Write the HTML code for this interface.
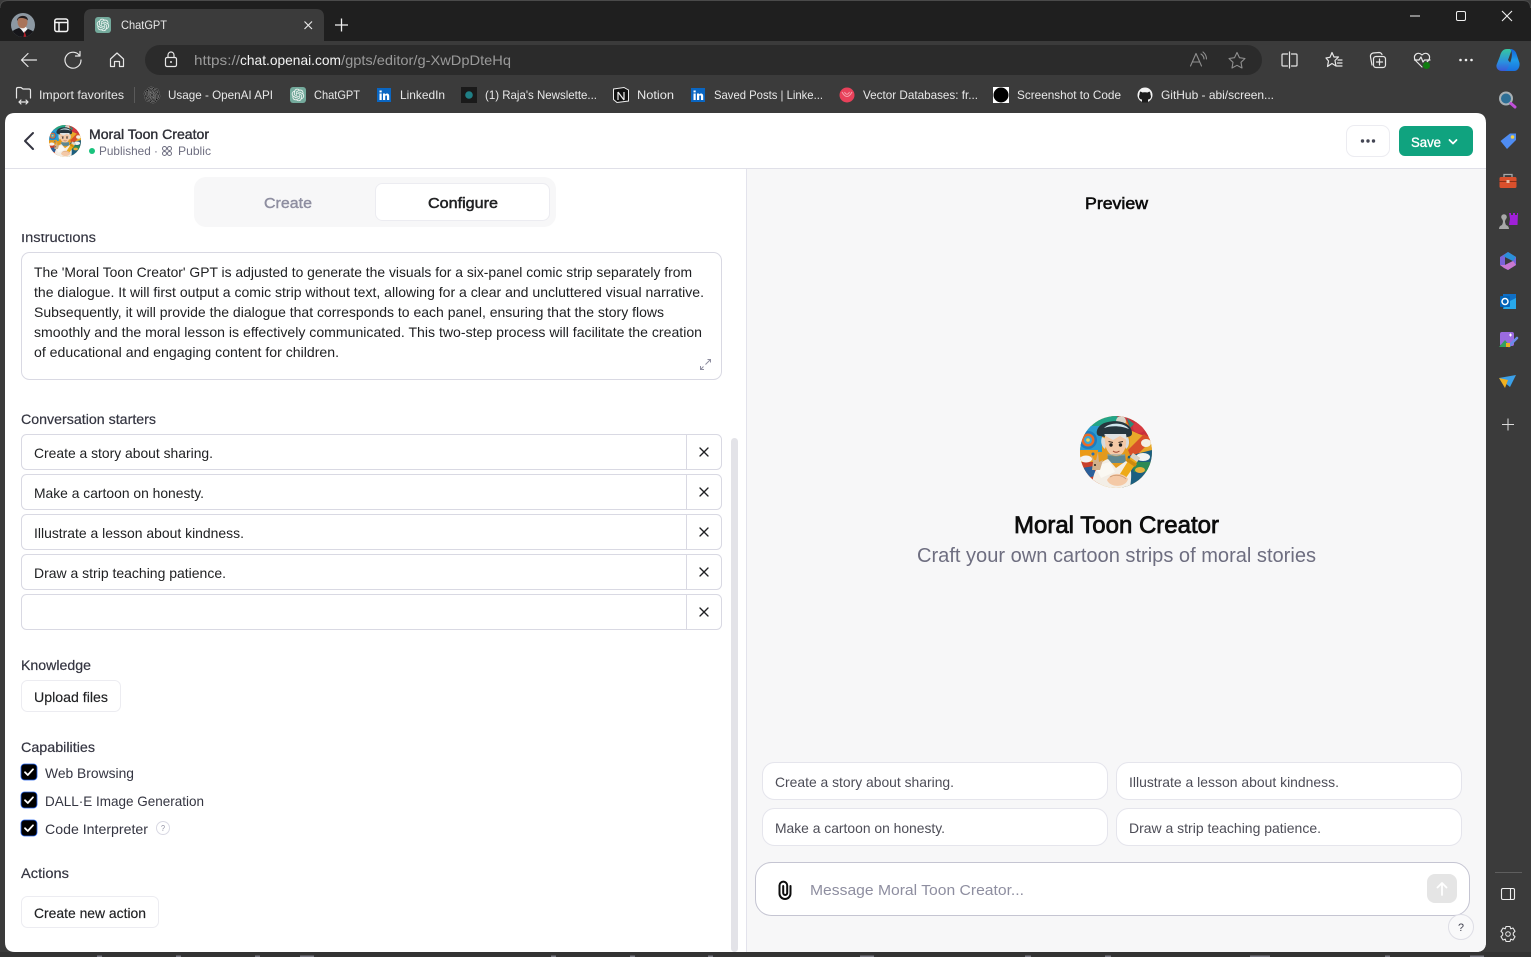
<!DOCTYPE html>
<html lang="en"><head><meta charset="utf-8"><title>ChatGPT</title>
<style>
html,body{margin:0;padding:0;background:#3b3b3b;width:1531px;height:957px;overflow:hidden}
svg{display:block}
text{font-family:"Liberation Sans",sans-serif;font-size:14px;fill:#343541;white-space:pre}
.b text,text.b{font-size:12px;fill:#e8e8e8}
.m{stroke:currentColor;stroke-width:.35;color:#202123}
.s{fill:none;stroke:#e6e6e6;stroke-width:1.2;stroke-linecap:round;stroke-linejoin:round}
.d{fill:none;stroke:#343541;stroke-width:1.5;stroke-linecap:round;stroke-linejoin:round}
</style></head><body>
<svg width="1531" height="957" viewBox="0 0 1531 957" xmlns="http://www.w3.org/2000/svg">
<defs>
<clipPath id="av"><circle cx="36" cy="36" r="36"/></clipPath>
<clipPath id="pv"><circle cx="23" cy="25" r="12"/></clipPath>
<linearGradient id="cp1" x1="0" y1="0" x2="0" y2="1"><stop offset="0" stop-color="#37c8a0"/><stop offset=".6" stop-color="#2a8fe0"/><stop offset="1" stop-color="#3a58d8"/></linearGradient>
<linearGradient id="cp2" x1="0" y1="0" x2="0" y2="1"><stop offset="0" stop-color="#1560d8"/><stop offset=".5" stop-color="#1f9be8"/><stop offset="1" stop-color="#1a70e0"/></linearGradient>
<g id="avatar"><g clip-path="url(#av)">
<rect width="72" height="72" fill="#e39a1c"/>
<path d="M0 0H40V8L20 10L8 20L0 22Z" fill="#23a488"/>
<path d="M36 0H72V22L52 16L46 4Z" fill="#c9303c"/>
<circle cx="41" cy="5" r="5" fill="#d8d4c8"/><circle cx="59" cy="11" r="6" fill="#d63a42"/><path d="M47 2L54 8L50 12Z" fill="#2d8a7a"/>
<path d="M0 10H22V36H0Z" fill="#2a9ad0"/>
<circle cx="8" cy="24" r="9" fill="#1c7cc0"/><circle cx="8" cy="24" r="6.500" fill="#e86a28"/><circle cx="8" cy="24" r="4" fill="#38a8d8"/><circle cx="8" cy="24" r="1.800" fill="#f4d050"/>
<path d="M0 34H18V46H0Z" fill="#eb9a18"/><circle cx="13" cy="38" r="1.500" fill="#2a6fb0"/>
<path d="M50 14L72 24V36L50 44Z" fill="#e8a92a"/><path d="M48 34L64 18L72 24L52 44Z" fill="#d8502a"/>
<ellipse cx="66" cy="27" rx="5" ry="4" fill="#f4f0e4"/>
<path d="M48 40L72 34V72H42Z" fill="#1c5f80"/>
<path d="M52 46H72V56H54Z" fill="#2d8a55"/>
<ellipse cx="63" cy="41" rx="7" ry="4" fill="#f2f4f4"/><ellipse cx="60" cy="54" rx="5" ry="3" fill="#e8b23a"/>
<path d="M0 46H16L20 72H0Z" fill="#c8402c"/><ellipse cx="6" cy="43" rx="6" ry="3.500" fill="#f3f3f3"/><path d="M2 52L14 50L16 60L5 62Z" fill="#2a5f9a"/>
<path d="M20 20C14 20 16 8 28 6C40 3 52 8 52 17C52 22 46 21 36 21C28 21 24 21 20 20Z" fill="#26363e"/>
<path d="M24 12C30 6 44 6 49 13C42 10 32 9 24 12Z" fill="#cfe6ee"/>
<path d="M22 21C20 26 22 31 25 33L28 24ZM48 21C50 26 49 31 46 33L43 24Z" fill="#d8dadb"/>
<path d="M25 20H46C47 31 44 40 36 40C28 40 24 31 25 20Z" fill="#f4c9a6"/>
<path d="M24 19L33 24L40 20L47 24L46 18H25Z" fill="#dfe1e2"/>
<path d="M28.500 25.500L33 26.500M43 25.500L38.500 26.500" stroke="#3a2a20" stroke-width="1"/>
<circle cx="31" cy="29" r="1.700" fill="#1d1d1d"/><circle cx="40.500" cy="29" r="1.700" fill="#1d1d1d"/>
<path d="M33 35Q36 37.500 39.500 35" stroke="#a0452f" stroke-width="1" fill="none"/>
<path d="M28 38C32 41 40 41 45 38L46 47H27Z" fill="#5d8791"/>
<path d="M27 39L45 39" stroke="#7fa4ad" stroke-width="1"/>
<path d="M12 72C12 58 18 46 28 43L36 52L46 45C52 48 52 60 50 72Z" fill="#f3eee6"/>
<path d="M15 50L30 46L35 56L21 62Z" fill="#faf8f2"/>
<path d="M10 36L13 46L12 54L20 54L23 44L19 46L18 36L16 44H14Z" fill="#d2b08a"/>
<circle cx="15" cy="49" r="1" fill="#222"/>
<path d="M53 37L60 42L43 66L37 69L37.500 62Z" fill="#eeaa18"/>
<path d="M48 42L57 48L55 51L46 45Z" fill="#cd8a10"/>
<path d="M53 37L60 42L57 46L50 41Z" fill="#d8d4c8"/>
<path d="M36 69L37.500 62L43 66Z" fill="#3a2a20"/>
<path d="M27 64C32 55 44 57 48 63C46 72 30 72 27 64Z" fill="#f4c9a6"/>
<path d="M30 61C35 58 42 59 46 63" stroke="#c89670" stroke-width=".8" fill="none"/>
</g></g>
<path id="oai" d="M22.2819 9.8211a5.9847 5.9847 0 0 0-.5157-4.9108 6.0462 6.0462 0 0 0-6.5098-2.9A6.0651 6.0651 0 0 0 4.9807 4.1818a5.9847 5.9847 0 0 0-3.9977 2.9 6.0462 6.0462 0 0 0 .7427 7.0966 5.98 5.98 0 0 0 .511 4.9107 6.051 6.051 0 0 0 6.5146 2.9001A5.9847 5.9847 0 0 0 13.2599 24a6.0557 6.0557 0 0 0 5.7718-4.2058 5.9894 5.9894 0 0 0 3.9977-2.9001 6.0557 6.0557 0 0 0-.7475-7.0729zm-9.022 12.6081a4.4755 4.4755 0 0 1-2.8764-1.0408l.1419-.0804 4.7783-2.7582a.7948.7948 0 0 0 .3927-.6813v-6.7369l2.02 1.1686a.071.071 0 0 1 .038.052v5.5826a4.504 4.504 0 0 1-4.4945 4.4944zm-9.6607-4.1254a4.4708 4.4708 0 0 1-.5346-3.0137l.142.0852 4.783 2.7582a.7712.7712 0 0 0 .7806 0l5.8428-3.3685v2.3324a.0804.0804 0 0 1-.0332.0615L9.74 19.9502a4.4992 4.4992 0 0 1-6.1408-1.6464zM2.3408 7.8956a4.485 4.485 0 0 1 2.3655-1.9728V11.6a.7664.7664 0 0 0 .3879.6765l5.8144 3.3543-2.0201 1.1685a.0757.0757 0 0 1-.071 0l-4.8303-2.7865A4.504 4.504 0 0 1 2.3408 7.872zm16.5963 3.8558L13.1038 8.364 15.1192 7.2a.0757.0757 0 0 1 .071 0l4.8303 2.7913a4.4944 4.4944 0 0 1-.6765 8.1042v-5.6772a.79.79 0 0 0-.407-.667zm2.0107-3.0231l-.142-.0852-4.7735-2.7818a.7759.7759 0 0 0-.7854 0L9.409 9.2297V6.8974a.0662.0662 0 0 1 .0284-.0615l4.8303-2.7866a4.4992 4.4992 0 0 1 6.6802 4.66zM8.3065 12.863l-2.02-1.1638a.0804.0804 0 0 1-.038-.0567V6.0742a4.4992 4.4992 0 0 1 7.3757-3.4537l-.142.0805L8.704 5.459a.7948.7948 0 0 0-.3927.6813zm1.0976-2.3654l2.602-1.4998 2.6069 1.4998v2.9994l-2.5974 1.4997-2.6067-1.4997Z"/>
<g id="gpt"><use href="#oai" fill="#f2f7f5" transform="translate(1.700 1.700) scale(.52)"/></g>
<g id="x"><path d="M-4 -4L4 4M4 -4L-4 4" stroke="#202123" stroke-width="1.350" stroke-linecap="round"/></g>
<g id="li"><rect width="14" height="14" fill="#0a66c2"/><path d="M2.500 5.500H4.700V12H2.500ZM2.500 2.500H4.700V4.400H2.500ZM6 5.500H8V6.500C9 5 12.200 5 12.200 8V12H10V8.500C10 6.800 8.200 6.800 8.200 8.500V12H6Z" fill="#fff"/></g>
<g id="chk"><rect x="0" y="0" width="16" height="16" rx="3.500" fill="#000" stroke="#2563eb" stroke-width=".8"/><path d="M4 8.200L6.800 11L12 5.300" stroke="#fff" stroke-width="1.800" fill="none" stroke-linecap="round" stroke-linejoin="round"/></g>
</defs>

<!-- chrome -->
<rect width="1531" height="957" fill="#3b3b3b"/>
<path d="M0 41V8Q0 1 8 1H1523Q1531 1 1531 8V41Z" fill="#1f1f1f"/>
<path d="M0 8Q0 .5 8 .5H1523Q1530.500 .5 1530.500 8" fill="none" stroke="#4a4a4a"/>
<rect x="0" y="952" width="1531" height="5" fill="#333"/>
<g fill="#777780"><rect x="97" y="955.500" width="5" height="1.500"/><rect x="176" y="955.500" width="5" height="1.500"/><rect x="255" y="955.500" width="5" height="1.500"/><rect x="300" y="955.500" width="14" height="1.500"/><rect x="551" y="955.500" width="5" height="1.500"/><rect x="630" y="955.500" width="5" height="1.500"/><rect x="708" y="955.500" width="5" height="1.500"/><rect x="860" y="955.500" width="14" height="1.500"/><rect x="1025" y="955.500" width="6" height="1.500"/><rect x="1105" y="955.500" width="6" height="1.500"/><rect x="1250" y="955.500" width="20" height="1.500"/><rect x="1385" y="955.500" width="5" height="1.500"/><rect x="1470" y="955.500" width="14" height="1.500"/></g>

<!-- tabs -->
<g clip-path="url(#pv)">
<rect x="11" y="13" width="24" height="24" fill="#8d99a3"/>
<path d="M11 37V33C13 30 16 29 19 28L24 31L28 29C31 30 33 31 35 33V37Z" fill="#16161a"/>
<path d="M20 28L24 33L27.500 29L26 27H21Z" fill="#f2f2f2"/>
<path d="M24.500 31L26.500 37H23.500Z" fill="#b01f28"/>
<ellipse cx="22.500" cy="22" rx="5" ry="6.300" fill="#a9745a"/>
<path d="M17 21C16.500 15 28 13.500 28 20.500C26 18 21 17.500 18.500 18.500Z" fill="#221c1e"/>
</g>
<rect x="54.800" y="19" width="13" height="12.500" rx="2" fill="none" stroke="#f4f4f4" stroke-width="1.500"/><path d="M55 22.500H67.500M59 22.500V31" stroke="#f4f4f4" stroke-width="1.500"/>
<path d="M84 41V17Q84 9 92 9H316Q324 9 324 17V41Z" fill="#3b3b3b"/>
<rect x="95" y="17" width="16" height="16" rx="3" fill="#74aa9c"/><use href="#gpt" x="95" y="17"/>
<text class="b" x="121" y="29" textLength="46" lengthAdjust="spacingAndGlyphs">ChatGPT</text>
<path d="M304.500 21.500L312 29M312 21.500L304.500 29" stroke="#e6e6e6" stroke-width="1.200"/>
<path d="M335 25H348M341.500 18.500V31.500" stroke="#f0f0f0" stroke-width="1.300"/>
<!-- window controls -->
<path d="M1410 16H1420" stroke="#f0f0f0"/><rect x="1456.500" y="11.500" width="9" height="9" rx="1.500" fill="none" stroke="#f0f0f0"/><path d="M1502 11L1512 21M1512 11L1502 21" stroke="#f0f0f0" stroke-width="1.100"/>

<!-- toolbar -->
<rect x="145" y="45" width="1117" height="30" rx="15" fill="#2b2b2b"/>
<path class="s" d="M21.500 60H36.500M21.500 60L28 53.500M21.500 60L28 66.500"/>
<path class="s" d="M79.500 55.500A8 8 0 1 0 81 60M80 51.500V56H75.500"/>
<path class="s" d="M110.500 59L117 53L123.500 59V66.500H119.500V61.500H114.500V66.500H110.500Z"/>
<rect x="165.500" y="57.500" width="11" height="9" rx="1.500" class="s"/><path class="s" d="M168 57.500V55A3 3 0 0 1 174 55V57.500"/><circle cx="171" cy="62" r="1" fill="#e6e6e6"/>
<text x="194" y="65" textLength="46" lengthAdjust="spacingAndGlyphs" style="fill:#9a9a9a">https://</text>
<text x="240" y="65" textLength="101" lengthAdjust="spacingAndGlyphs" style="fill:#f4f4f4">chat.openai.com</text>
<text x="341" y="65" textLength="170" lengthAdjust="spacingAndGlyphs" style="fill:#9a9a9a">/gpts/editor/g-XwDpDteHq</text>
<g fill="none" stroke="#8f8f8f" stroke-width="1.100" stroke-linecap="round" stroke-linejoin="round">
<path d="M1190.500 66L1196 53.500L1201.500 66M1192.500 62H1199.500M1201 54Q1204 56 1204 59M1203 52Q1206.500 55 1206.500 59"/>
<path d="M1237 52.500L1239.500 57.700L1245 58.500L1241 62.300L1242 68L1237 65.300L1232 68L1233 62.300L1229 58.500L1234.500 57.700Z"/></g>
<g class="s">
<path d="M1287.500 54H1283Q1282 54 1282 55V65Q1282 66 1283 66H1287.500M1291.500 54H1296Q1297 54 1297 55V65Q1297 66 1296 66H1291.500M1289.500 52V68"/>
<path d="M1332 52.500L1334 57H1338.500L1335 60.500L1336 66L1332 63.500L1327.500 66.500L1328.500 61L1326 58L1330 57.300Z"/><path d="M1338 60H1342M1337.500 63H1342M1336.500 66H1342"/>
<path d="M1372 65L1370.500 57Q1370 54 1373 53L1379 52.500Q1381 52.500 1382 54.500"/><rect x="1373.500" y="56.500" width="12" height="11" rx="2.500"/><path d="M1379.500 59V65M1376.500 62H1382.500"/>
<path d="M1422 67L1415.500 60.500C1412 56 1417.500 50.500 1422 55C1426.500 50.500 1432 56 1428.500 60.500L1427 62M1414.500 60H1419L1421 57L1423 62L1424.500 60H1430"/></g>
<circle cx="1426.500" cy="65.500" r="3.500" fill="#107c10"/>
<g fill="#f0f0f0"><circle cx="1460.500" cy="60" r="1.300"/><circle cx="1466" cy="60" r="1.300"/><circle cx="1471.500" cy="60" r="1.300"/></g>
<!-- copilot -->
<path d="M1512 49H1507C1503 49 1501 52 1500 56L1496.500 65C1496 68 1498 71 1502 71H1506C1510 71 1511 68 1512 65L1508 60Z" fill="url(#cp1)"/>
<path d="M1505 71H1514C1518 71 1520 67 1519.500 63L1516.500 54C1515.500 50.500 1513 49 1510 49C1513 52 1512 58 1510 63C1508.500 67 1507 70 1505 71Z" fill="url(#cp2)"/>

<!-- bookmarks -->
<g class="b">
<path class="s" d="M16.500 98V89Q16.500 87.500 18 87.500H21L23 89H29Q30.500 89 30.500 90.500V98M19 102H28M19 102L21 100M19 102L21 104M28 102L26 100M28 102L26 104"/>
<text x="39" y="99" textLength="85" lengthAdjust="spacingAndGlyphs">Import favorites</text>
<rect x="134" y="87" width="1" height="16" fill="#5a5a5a"/>
<use href="#oai" fill="#050505" stroke="#cfcfcf" stroke-width=".5" transform="translate(144 87) scale(.667)"/>
<text x="168" y="99" textLength="105" lengthAdjust="spacingAndGlyphs">Usage - OpenAI API</text>
<rect x="290" y="87" width="16" height="16" rx="3" fill="#74aa9c"/><use href="#gpt" x="290" y="87"/>
<text x="314" y="99" textLength="46" lengthAdjust="spacingAndGlyphs">ChatGPT</text>
<use href="#li" x="377" y="88"/>
<text x="400" y="99" textLength="45" lengthAdjust="spacingAndGlyphs">LinkedIn</text>
<rect x="461" y="87" width="16" height="16" fill="#1a1a1a"/><circle cx="469" cy="95" r="3.800" fill="#1f7f85"/>
<text x="485" y="99" textLength="112" lengthAdjust="spacingAndGlyphs">(1) Raja's Newslette...</text>
<path d="M613.500 89L624 87.500L628.500 90V101L617 102.500L613.500 99.500Z" fill="#111" stroke="#eee"/><path d="M618 92V100M618 92L624 100M624 92V100" stroke="#eee" stroke-width="1.200" fill="none"/>
<text x="637" y="99" textLength="37" lengthAdjust="spacingAndGlyphs">Notion</text>
<use href="#li" x="691" y="88"/>
<text x="714" y="99" textLength="109" lengthAdjust="spacingAndGlyphs">Saved Posts | Linke...</text>
<circle cx="847" cy="95" r="7.500" fill="#e8415a"/><path d="M842 92Q847 101 852 92M844.500 92Q847 96.500 849.500 92" stroke="#f5a0ac" fill="none"/>
<text x="863" y="99" textLength="115" lengthAdjust="spacingAndGlyphs">Vector Databases: fr...</text>
<rect x="993" y="87" width="16" height="16" fill="#fff"/><circle cx="1001" cy="95" r="7.500" fill="#000"/>
<text x="1017" y="99" textLength="104" lengthAdjust="spacingAndGlyphs">Screenshot to Code</text>
<circle cx="1145" cy="95" r="7.500" fill="#f4f4f4"/><path d="M1142 102.500V99.500C1139 99 1138.500 97 1139.500 94.500Q1139.500 92 1140.500 91.500L1142.500 92.500Q1145 92 1147.500 92.500L1149.500 91.500Q1150.500 92.500 1150.500 94.500C1151.500 97 1151 99 1148 99.500V102.500Z" fill="#1d1d1d"/>
<text x="1161" y="99" textLength="113" lengthAdjust="spacingAndGlyphs">GitHub - abi/screen...</text>
</g>

<!-- page -->
<path d="M15 113H1476Q1486 113 1486 123V942Q1486 952 1476 952H15Q5 952 5 942V123Q5 113 15 113Z" fill="#fff"/>
<path d="M747 169H1486V942Q1486 952 1476 952H747Z" fill="#f7f7f8"/>
<rect x="5" y="168" width="1481" height="1" fill="#e0e0e8"/>
<rect x="746" y="169" width="1" height="783" fill="#e3e3ec"/>

<!-- header -->
<path d="M33 133L25 141L33 149" fill="none" stroke="#343541" stroke-width="2" stroke-linecap="round" stroke-linejoin="round"/>
<use href="#avatar" transform="translate(49 125) scale(.4445)"/>
<text class="m" x="89" y="139" textLength="120" lengthAdjust="spacingAndGlyphs">Moral Toon Creator</text>
<circle cx="92" cy="151" r="3" fill="#19c37d"/>
<text x="99" y="155" textLength="59" lengthAdjust="spacingAndGlyphs" style="font-size:12px;fill:#6e6e80">Published ·</text>
<g fill="none" stroke="#6e6e80" stroke-width="1"><circle cx="164.500" cy="148.500" r="2"/><circle cx="169.500" cy="148.500" r="2"/><circle cx="164.500" cy="153.500" r="2"/><circle cx="169.500" cy="153.500" r="2"/></g>
<text x="178" y="155" textLength="33" lengthAdjust="spacingAndGlyphs" style="font-size:12px;fill:#6e6e80">Public</text>
<rect x="1346.500" y="125.500" width="43" height="31" rx="8" fill="#fff" stroke="#ececf1"/>
<g fill="#444654"><circle cx="1362.500" cy="141" r="1.700"/><circle cx="1368" cy="141" r="1.700"/><circle cx="1373.500" cy="141" r="1.700"/></g>
<rect x="1399" y="126" width="74" height="30" rx="6" fill="#10a37f"/>
<text class="m" x="1411" y="147" textLength="30" lengthAdjust="spacingAndGlyphs" style="fill:#fff;color:#fff">Save</text>
<path d="M1449.500 140L1453 143.500L1456.500 140" fill="none" stroke="#fff" stroke-width="1.800" stroke-linecap="round" stroke-linejoin="round"/>

<!-- left form -->
<text class="m" x="21" y="242" textLength="75" lengthAdjust="spacingAndGlyphs" style="color:#343541;stroke-width:.15">Instructions</text>
<rect x="5" y="169" width="725" height="65" fill="#fff"/>
<rect x="194" y="177" width="362" height="50" rx="12" fill="#f7f7f8"/>
<rect x="375.500" y="183.500" width="174" height="37" rx="7" fill="#fff" stroke="#ececf1"/>
<text class="m" x="264" y="208" textLength="48" lengthAdjust="spacingAndGlyphs" style="font-size:15px;fill:#8e8ea0;color:#8e8ea0;stroke-width:.4">Create</text>
<text class="m" x="428" y="208" textLength="70" lengthAdjust="spacingAndGlyphs" style="font-size:15px;fill:#202123;color:#202123;stroke-width:.5">Configure</text>

<rect x="21.500" y="252.500" width="700" height="127" rx="8" fill="#fff" stroke="#d9d9e3"/>
<text x="34" y="277" textLength="658" lengthAdjust="spacingAndGlyphs" style="fill:#202123">The 'Moral Toon Creator' GPT is adjusted to generate the visuals for a six-panel comic strip separately from</text>
<text x="34" y="297" textLength="670" lengthAdjust="spacingAndGlyphs" style="fill:#202123">the dialogue. It will first output a comic strip without text, allowing for a clear and uncluttered visual narrative.</text>
<text x="34" y="317" textLength="630" lengthAdjust="spacingAndGlyphs" style="fill:#202123">Subsequently, it will provide the dialogue that corresponds to each panel, ensuring that the story flows</text>
<text x="34" y="337" textLength="668" lengthAdjust="spacingAndGlyphs" style="fill:#202123">smoothly and the moral lesson is effectively communicated. This two-step process will facilitate the creation</text>
<text x="34" y="357" textLength="305" lengthAdjust="spacingAndGlyphs" style="fill:#202123">of educational and engaging content for children.</text>
<path d="M705.500 364.500L710.500 359.500M707.500 359.500H710.500V362.500M700.500 369.500L703.500 366.500M700.500 366V369.500H704" fill="none" stroke="#8e8ea0" stroke-width="1"/>

<text class="m" x="21" y="424" textLength="135" lengthAdjust="spacingAndGlyphs" style="color:#343541;stroke-width:.2">Conversation starters</text>
<g fill="#fff" stroke="#d9d9e3">
<rect x="21.500" y="434.500" width="700" height="35" rx="5"/>
<rect x="21.500" y="474.500" width="700" height="35" rx="5"/>
<rect x="21.500" y="514.500" width="700" height="35" rx="5"/>
<rect x="21.500" y="554.500" width="700" height="35" rx="5"/>
<rect x="21.500" y="594.500" width="700" height="35" rx="5"/>
<path d="M686.500 435V469M686.500 475V509M686.500 515V549M686.500 555V589M686.500 595V629" fill="none"/>
</g>
<text x="34" y="458" textLength="179" lengthAdjust="spacingAndGlyphs" style="fill:#202123">Create a story about sharing.</text>
<text x="34" y="498" textLength="170" lengthAdjust="spacingAndGlyphs" style="fill:#202123">Make a cartoon on honesty.</text>
<text x="34" y="538" textLength="210" lengthAdjust="spacingAndGlyphs" style="fill:#202123">Illustrate a lesson about kindness.</text>
<text x="34" y="578" textLength="192" lengthAdjust="spacingAndGlyphs" style="fill:#202123">Draw a strip teaching patience.</text>
<use href="#x" x="704" y="452"/><use href="#x" x="704" y="492"/><use href="#x" x="704" y="532"/><use href="#x" x="704" y="572"/><use href="#x" x="704" y="612"/>

<text class="m" x="21" y="670" textLength="70" lengthAdjust="spacingAndGlyphs" style="color:#343541;stroke-width:.2">Knowledge</text>
<rect x="21.500" y="680.500" width="99" height="31" rx="6" fill="#fff" stroke="#ececf1"/>
<text class="m" x="34" y="702" textLength="74" lengthAdjust="spacingAndGlyphs" style="fill:#202123;stroke-width:.15">Upload files</text>
<text class="m" x="21" y="752" textLength="74" lengthAdjust="spacingAndGlyphs" style="color:#343541;stroke-width:.2">Capabilities</text>
<use href="#chk" x="21" y="764"/><use href="#chk" x="21" y="792"/><use href="#chk" x="21" y="820"/>
<text x="45" y="778" textLength="89" lengthAdjust="spacingAndGlyphs">Web Browsing</text>
<text x="45" y="806" textLength="159" lengthAdjust="spacingAndGlyphs">DALL·E Image Generation</text>
<text x="45" y="834" textLength="103" lengthAdjust="spacingAndGlyphs">Code Interpreter</text>
<circle cx="163" cy="828" r="6.500" fill="#fff" stroke="#d9d9e3"/>
<text x="161" y="831" textLength="4" lengthAdjust="spacingAndGlyphs" style="font-size:8px;fill:#8e8ea0">?</text>
<text class="m" x="21" y="878" textLength="48" lengthAdjust="spacingAndGlyphs" style="color:#343541;stroke-width:.2">Actions</text>
<rect x="21.500" y="896.500" width="137" height="31" rx="6" fill="#fff" stroke="#ececf1"/>
<text class="m" x="34" y="918" textLength="112" lengthAdjust="spacingAndGlyphs" style="fill:#202123;stroke-width:.15">Create new action</text>
<rect x="731" y="438" width="7" height="514" rx="3.500" fill="#e3e3e8"/>

<!-- preview -->
<text class="m" x="1085" y="209" textLength="63" lengthAdjust="spacingAndGlyphs" style="font-size:17px;fill:#0d0d0d;color:#0d0d0d;stroke-width:.6">Preview</text>
<use href="#avatar" x="1080" y="416"/>
<text class="m" x="1014" y="533" textLength="205" lengthAdjust="spacingAndGlyphs" style="font-size:24px;fill:#0d0d0d;color:#0d0d0d;stroke-width:.75">Moral Toon Creator</text>
<text x="917" y="562" textLength="399" lengthAdjust="spacingAndGlyphs" style="font-size:20px;fill:#6e6e80">Craft your own cartoon strips of moral stories</text>

<g fill="#fff" stroke="#e5e5ec">
<rect x="762.500" y="762.500" width="345" height="37" rx="12"/>
<rect x="1116.500" y="762.500" width="345" height="37" rx="12"/>
<rect x="762.500" y="808.500" width="345" height="37" rx="12"/>
<rect x="1116.500" y="808.500" width="345" height="37" rx="12"/>
</g>
<text x="775" y="787" textLength="179" lengthAdjust="spacingAndGlyphs" style="fill:#4d4d57">Create a story about sharing.</text>
<text x="1129" y="787" textLength="210" lengthAdjust="spacingAndGlyphs" style="fill:#4d4d57">Illustrate a lesson about kindness.</text>
<text x="775" y="833" textLength="170" lengthAdjust="spacingAndGlyphs" style="fill:#4d4d57">Make a cartoon on honesty.</text>
<text x="1129" y="833" textLength="192" lengthAdjust="spacingAndGlyphs" style="fill:#4d4d57">Draw a strip teaching patience.</text>

<rect x="755.500" y="862.500" width="714" height="53" rx="16" fill="#fff" stroke="#c5c5d2"/>
<path d="M790.500 886V893.500A5.500 5.500 0 0 1 779.500 893.500V885.500A3.800 3.800 0 0 1 787.200 885.500V893A2 2 0 0 1 783.200 893V886" fill="none" stroke="#0d0d0d" stroke-width="2" stroke-linecap="round"/>
<text x="810" y="895" textLength="214" lengthAdjust="spacingAndGlyphs" style="font-size:15px;fill:#8e8ea0">Message Moral Toon Creator...</text>
<rect x="1427" y="874" width="30" height="29" rx="8" fill="#e5e5e5"/>
<path d="M1442 895V883M1437.500 887.500L1442 883L1446.500 887.500" fill="none" stroke="#fff" stroke-width="1.800" stroke-linecap="round" stroke-linejoin="round"/>
<circle cx="1461" cy="927" r="12.500" fill="#f9f9fa" stroke="#dedee6"/>
<text x="1458" y="931" textLength="6" lengthAdjust="spacingAndGlyphs" style="font-size:11px;fill:#40414f">?</text>

<!-- sidebar -->
<circle cx="1506" cy="98.500" r="6" fill="#2e6f96" stroke="#a8b0b4" stroke-width="2"/><path d="M1511 103.500L1515 107" stroke="#c04fd8" stroke-width="3" stroke-linecap="round"/>
<path d="M1500.500 141L1510 133.500H1516V140L1507 149Z" fill="#4f8cf2"/><circle cx="1512.500" cy="137" r="1.800" fill="#f5d142"/>
<rect x="1499.500" y="177" width="17" height="11" rx="1.500" fill="#d9502c"/><path d="M1504 177V174.500H1512V177" fill="none" stroke="#a8a8a8" stroke-width="1.300"/><rect x="1499.500" y="181" width="17" height="1" fill="#8a3018"/><rect x="1506.500" y="180" width="3" height="3" fill="#e8c0a8"/>
<path d="M1499 229Q1499 226 1502 225Q1504 221 1502 219A2.800 2.800 0 1 1 1506 219Q1504 221 1506 225Q1509 226 1509 229Z" fill="#a8a8a8"/>
<path d="M1509 225L1510 219L1509 213H1511V215H1513V213H1515V215H1517V213H1518L1517.500 225Z" fill="#a020d8"/>
<path d="M1508 252L1516 257V265L1508 270L1500 265V257Z" fill="#7a62d8"/><path d="M1505 257L1513 261L1505 265Z" fill="#3b3b3b"/><path d="M1508 252L1516 257L1513 261L1503 256Z" fill="#2a90d8"/><path d="M1500 265L1504 268L1508 270L1516 265L1513 261L1505 265Z" fill="#c878d0"/>
<rect x="1503" y="294" width="13" height="15" fill="#0f6fc6"/><path d="M1508 302L1516 298V309H1503Z" fill="#28a8ea"/><rect x="1500" y="296" width="10" height="11" rx="1" fill="#0364b8"/><circle cx="1505" cy="301.500" r="3" fill="none" stroke="#fff" stroke-width="1.500"/>
<rect x="1500" y="332" width="14" height="14" rx="2" fill="#9b6be0"/><path d="M1499 347L1505 340L1511 347Z" fill="#35a060"/><path d="M1509 346L1517 338" stroke="#6a8ce8" stroke-width="2.600" stroke-linecap="round"/><rect x="1506" y="343" width="4" height="4" fill="#f0b020"/><path d="M1509 335H1512M1510.500 333.500V336.500" stroke="#fff"/>
<path d="M1499 378L1516 375L1510 387Z" fill="#3ba0e8"/><path d="M1499 378L1508 380L1505 388Z" fill="#f0b020"/>
<path d="M1502 424.500H1514M1508 418.500V430.500" stroke="#dcdcdc"/>
<rect x="1495" y="872" width="27" height="1" fill="#5e5e5e"/>
<rect x="1501.500" y="888.500" width="13" height="11" rx="1.500" fill="none" stroke="#eee" stroke-width="1.100"/><path d="M1510.500 889V899" stroke="#eee" stroke-width="1.100"/>
<circle cx="1508" cy="934" r="2.300" fill="none" stroke="#e6e6e6"/>
<path d="M1506 926.500H1510L1510.700 928.800L1513 928L1515 931.300L1513.300 933V935L1515 936.700L1513 940L1510.700 939.200L1510 941.500H1506L1505.300 939.200L1503 940L1501 936.700L1502.700 935V933L1501 931.300L1503 928L1505.300 928.800Z" fill="none" stroke="#e6e6e6" stroke-width="1.100" stroke-linejoin="round"/>
</svg>
</body></html>
